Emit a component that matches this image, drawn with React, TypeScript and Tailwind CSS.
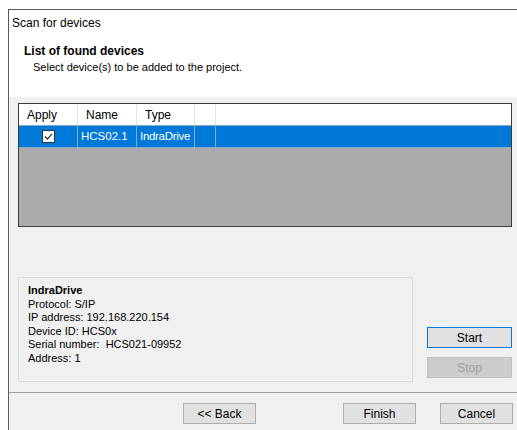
import React from 'react';

type Device = {
  apply: boolean;
  name: string;
  type: string;
};

const devices: Device[] = [{ apply: true, name: 'HCS02.1', type: 'IndraDrive' }];

const details = [
  'Protocol: S/IP',
  'IP address: 192.168.220.154',
  'Device ID: HCS0x',
  'Serial number:  HCS021-09952',
  'Address: 1',
];

const CheckBox: React.FC<{ checked: boolean }> = ({ checked }) => (
  <span className="flex h-[13px] w-[13px] items-center justify-center border border-[#333333] bg-white">
    {checked && (
      <svg width="9" height="9" viewBox="0 0 9 9">
        <path d="M1 4.5 L3.5 7 L8 1.8" fill="none" stroke="#333333" strokeWidth="1.2" />
      </svg>
    )}
  </span>
);

const WinButton: React.FC<{ label: string; focused?: boolean; disabled?: boolean; className?: string }> = ({
  label,
  focused,
  disabled,
  className = '',
}) => (
  <button
    disabled={disabled}
    className={`flex h-[21px] w-[85px] items-center justify-center text-[12px] ${
      disabled
        ? 'border border-[#bfbfbf] bg-[#cccccc] text-[#a0a0a0]'
        : focused
        ? 'border border-[#0078d7] bg-[#e1e1e1] text-black'
        : 'border border-[#adadad] bg-[#e1e1e1] text-black'
    } ${className}`}
  >
    {label}
  </button>
);

export default function App() {
  return (
    <div
      className="h-[430px] w-[517px] overflow-hidden bg-white pl-[8px] pt-[9px]"
      style={{ fontFamily: '"Liberation Sans", Arial, sans-serif' }}
    >
      <div className="flex h-full flex-col border-l border-t border-[#5a5a5a]">
        {/* Header */}
        <div className="h-[87px] shrink-0 bg-white">
          <div className="pl-[3px] pt-[5px] text-[12px] leading-[16px] text-black">Scan for devices</div>
          <div className="pl-[15px] pt-[13px] text-[12px] font-bold leading-[15px] text-black">
            List of found devices
          </div>
          <div className="pl-[24px] pt-[1px] text-[11px] leading-[14px] text-black">
            Select device(s) to be added to the project.
          </div>
        </div>

        {/* Body */}
        <div className="flex flex-1 flex-col bg-[#f0f0f0]">
          <div className="pl-[9px] pr-[5px] pt-[6px]">
            {/* Device grid */}
            <div className="flex h-[124px] flex-col border border-[#3c3c3c] bg-[#ababab]">
              <div className="flex h-[21px] bg-white text-[12px] leading-[22px] text-black">
                <div className="w-[59px] border-r border-[#e5e5e5] pl-[8px]">Apply</div>
                <div className="w-[59px] border-r border-[#e5e5e5] pl-[8px]">Name</div>
                <div className="w-[58px] border-r border-[#e5e5e5] pl-[8px]">Type</div>
                <div className="w-[21px] border-r border-[#e5e5e5]" />
                <div className="flex-1" />
              </div>
              {devices.map((d) => (
                <div
                  key={d.name}
                  className="flex h-[23px] border-t border-b border-[#8aa8c8] bg-[#0078d7] text-[11.5px] leading-[21px] text-white"
                >
                  <div className="flex w-[59px] items-center justify-center border-r border-[#8aa8c8]">
                    <CheckBox checked={d.apply} />
                  </div>
                  <div className="w-[59px] border-r border-[#8aa8c8] pl-[3px]">{d.name}</div>
                  <div className="w-[58px] overflow-hidden whitespace-nowrap border-r border-[#8aa8c8] pl-[3px] tracking-[-0.3px]">
                    {d.type}
                  </div>
                  <div className="w-[21px] border-r border-[#8aa8c8]" />
                  <div className="flex-1" />
                </div>
              ))}
            </div>

            {/* Details and scan controls */}
            <div className="mt-[50px] flex items-end justify-between">
              <div className="h-[105px] w-[395px] border border-[#dcdcdc] pl-[9px] pt-[6px] text-[11px] leading-[13.5px] text-black">
                <div className="font-bold">IndraDrive</div>
                {details.map((line) => (
                  <div key={line} className="whitespace-pre">
                    {line}
                  </div>
                ))}
              </div>
              <div className="mb-[4px] flex flex-col gap-[9px]">
                <WinButton label="Start" focused />
                <WinButton label="Stop" disabled />
              </div>
            </div>
          </div>

          {/* Footer */}
          <div className="mt-[10px] border-t border-[#a0a0a0]">
            <div className="flex pl-[174px] pt-[10px]">
              <WinButton label="<< Back" className="!w-[73px]" />
              <WinButton label="Finish" className="ml-[87px] !w-[73px]" />
              <WinButton label="Cancel" className="ml-[24px] !w-[73px]" />
            </div>
          </div>
        </div>
      </div>
    </div>
  );
}
